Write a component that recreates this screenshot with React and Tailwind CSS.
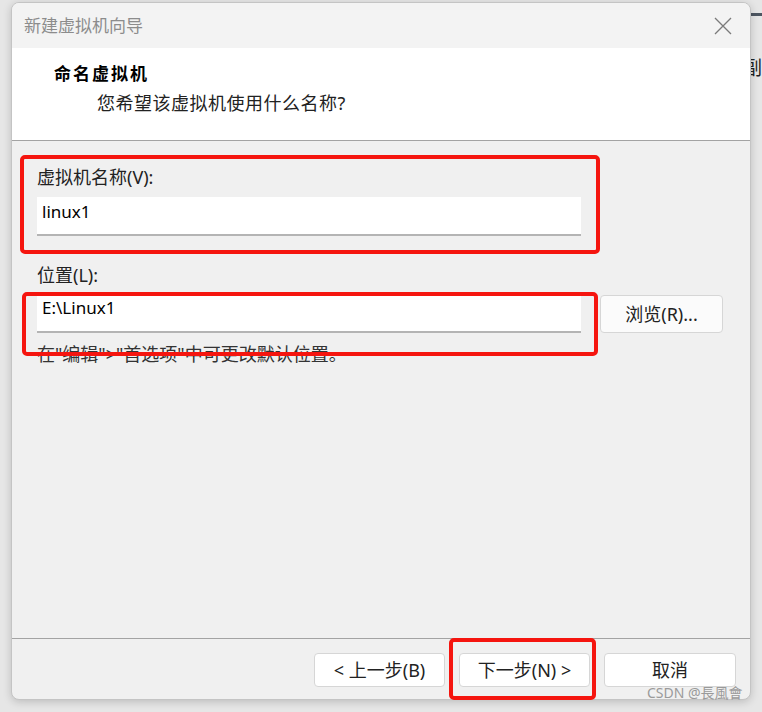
export default function App() {
  const f = { fontFamily: '"Noto Sans", "Noto Sans CJK SC", sans-serif' };
  return (
    <div className="relative w-[762px] h-[712px] overflow-hidden bg-[#e6e6e6]" style={f}>
      {/* background bits on the right */}
      <div className="absolute left-[748px] top-[13px] w-[14px] h-[3px] bg-[#4d5661]" />
      <div className="absolute left-[743px] top-[56px] text-[19px] leading-[24px] text-[#222]">副</div>

      <div className="absolute left-[11px] top-[2px] w-[740px] h-[698px] rounded-[8px] border border-[#c4c4c4] shadow-[0_2px_8px_rgba(0,0,0,0.18)] overflow-hidden flex flex-col bg-[#f0f0f0]">
        {/* title bar */}
        <div className="h-[45px] bg-[#f3f3f3] flex items-center justify-between pl-[12px] pr-[16px] shrink-0">
          <span className="text-[17px] text-[#8c8c8c]">新建虚拟机向导</span>
          <svg width="18" height="18" viewBox="0 0 18 18" className="mr-[2px]">
            <path d="M1 1 L17 17 M17 1 L1 17" stroke="#7a7a7a" strokeWidth="1.3" />
          </svg>
        </div>
        {/* header */}
        <div className="h-[93px] bg-white border-b border-[#a3a3a3] shrink-0 pl-[42px] pt-[13px]">
          <div className="text-[17px] font-bold text-black tracking-[2px] leading-[26px]">命名虚拟机</div>
          <div className="text-[18px] text-[#222] pl-[43px] mt-[2px] leading-[28px] tracking-[0.5px]">您希望该虚拟机使用什么名称?</div>
        </div>
        {/* body */}
        <div className="flex-1 border-b border-[#a3a3a3] pl-[25px] pt-[23px]">
          <div className="text-[18px] text-[#222] leading-[26px]">虚拟机名称(V):</div>
          <div className="mt-[7px] w-[544px] h-[39px] bg-white border-b-2 border-[#b4b4b4] pl-[5px] pt-[2px] text-[17px] text-black leading-[26px]">linux1</div>
          <div className="mt-[26px] text-[18px] text-[#222] leading-[26px]">位置(L):</div>
          <div className="mt-[7px] flex gap-[19px]">
            <div className="w-[544px] h-[38px] bg-white border-b-2 border-[#b4b4b4] pl-[5px] pt-[0px] text-[17px] text-black leading-[26px]">E:\Linux1</div>
            <div className="w-[123px] h-[38px] bg-[#fbfbfb] border border-[#d6d6d6] rounded-[4px] flex items-center justify-center text-[18px] text-[#222]">浏览(R)...</div>
          </div>
          <div className="mt-[8px] text-[18px] text-[#333] leading-[26px]">在"编辑"&gt;"首选项"中可更改默认位置。</div>
        </div>
        {/* footer */}
        <div className="h-[60px] shrink-0 flex items-start justify-end gap-[14px] pr-[14px] pt-[14px]">
          <div className="w-[131px] h-[34px] bg-white border border-[#d6d6d6] rounded-[4px] flex items-center justify-center text-[18px] text-[#222]">&lt; 上一步(B)</div>
          <div className="w-[131px] h-[34px] bg-white border border-[#d6d6d6] rounded-[4px] flex items-center justify-center text-[18px] text-[#222]">下一步(N) &gt;</div>
          <div className="w-[132px] h-[34px] bg-white border border-[#d6d6d6] rounded-[4px] flex items-center justify-center text-[18px] text-[#222]">取消</div>
        </div>
      </div>

      {/* annotations */}
      <div className="absolute left-[20px] top-[155px] w-[580px] h-[99px] border-[4px] border-[#f5150f] rounded-[5px]" />
      <div className="absolute left-[22px] top-[292px] w-[576px] h-[64px] border-[4px] border-[#f5150f] rounded-[5px]" />
      <div className="absolute left-[449px] top-[638px] w-[147px] h-[62px] border-[4px] border-[#f5150f] rounded-[5px]" />
      <div className="absolute left-[647px] top-[684px] text-[14px] leading-[18px] text-[#9a9a9a]">CSDN @長風會</div>
    </div>
  );
}
